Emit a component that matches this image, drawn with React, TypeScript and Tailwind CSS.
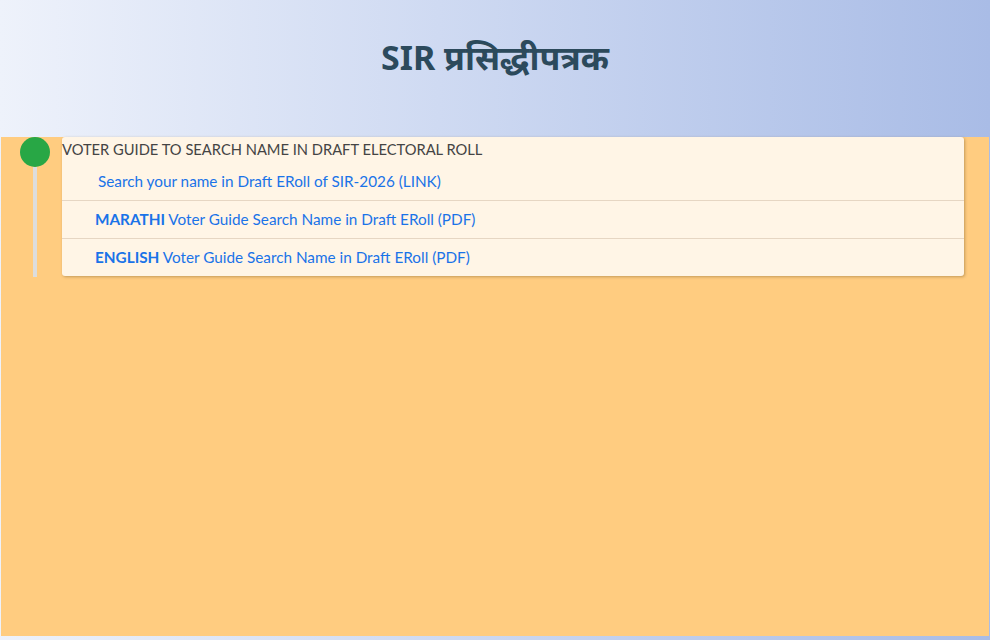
export default function App() {
  const rows = [
    { bold: "", text: "Search your name in Draft ERoll of SIR-2026 (LINK)", pl: "pl-[36px]" },
    { bold: "MARATHI", text: " Voter Guide Search Name in Draft ERoll (PDF)", pl: "pl-[33px]" },
    { bold: "ENGLISH", text: " Voter Guide Search Name in Draft ERoll (PDF)", pl: "pl-[33px]" },
  ];
  return (
    <div
      className="flex h-[640px] w-[990px] flex-col overflow-hidden bg-gradient-to-r from-[#eef2fb] to-[#a9bce6]"
      style={{ fontFamily: "Lato, 'Noto Sans', 'Noto Sans Devanagari', sans-serif" }}
    >
      <header className="flex h-[137px] shrink-0 items-center justify-center pb-[23px]">
        <h1
          className="text-[34px] font-bold text-[#2c4a5c]"
          style={{ fontFamily: "'Noto Sans', 'Noto Sans Devanagari', Lato, sans-serif" }}
        >
          SIR प्रसिद्धीपत्रक
        </h1>
      </header>
      <main className="mx-px mb-[4px] flex flex-1 items-start gap-[12px] bg-[#ffcc80] pl-[18px] pr-[25px]">
        <div className="flex w-[31px] shrink-0 flex-col items-center">
          <div className="h-[30px] w-[30px] rounded-full bg-[#28a745]" />
          <div className="h-[110px] w-[4px] bg-[#dddddd]" />
        </div>
        <div className="flex-1 rounded-[3px] bg-[#fff5e6] shadow-[1px_1px_3px_rgba(120,90,40,0.45)]">
          <div className="h-[25px] pt-[1px] text-[14.7px] leading-[22px] text-[#444444]">
            VOTER GUIDE TO SEARCH NAME IN DRAFT ELECTORAL ROLL
          </div>
          {rows.map((r, i) => (
            <div
              key={i}
              className={`${r.pl} ${i > 0 ? "border-t border-[#e6d6c3] pt-[8px]" : "pt-[9px]"} h-[38px] text-[15.3px] leading-[20px] text-[#1a73e8]`}
            >
              {r.bold && <span className="font-bold">{r.bold}</span>}
              {r.text}
            </div>
          ))}
        </div>
      </main>
    </div>
  );
}
